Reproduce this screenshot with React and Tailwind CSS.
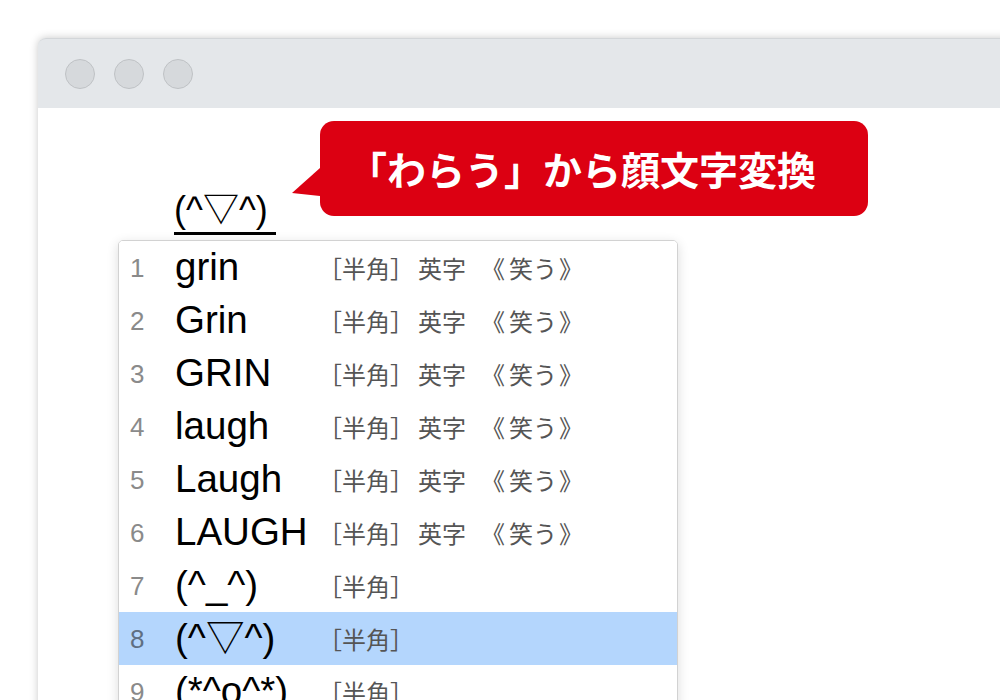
import React from "react";

const rows = [
  { n: 1, w: "grin", full: true },
  { n: 2, w: "Grin", full: true },
  { n: 3, w: "GRIN", full: true },
  { n: 4, w: "laugh", full: true },
  { n: 5, w: "Laugh", full: true },
  { n: 6, w: "LAUGH", full: true },
  { n: 7, w: "(^_^)", full: false },
  { n: 8, w: "(^▽^)", full: false, sel: true },
  { n: 9, w: "(*^o^*)", full: false },
];

const latin = { fontFamily: '"Liberation Sans", "Noto Sans CJK JP", sans-serif' };
const jp = { fontFamily: '"Noto Sans CJK JP", sans-serif' };

function Row({ r }) {
  return (
    <div className={`flex h-[53px] items-center ${r.sel ? "bg-[#b4d6fd]" : "bg-white"}`}>
      <div
        className={`w-[56px] pl-[11px] text-[26px] leading-none ${r.sel ? "text-[#5f6f82]" : "text-[#8a8a8a]"}`}
        style={latin}
      >
        {r.n}
      </div>
      <div className="w-[143px] text-[38.5px] leading-none text-black whitespace-nowrap" style={latin}>
        {r.w}
      </div>
      <div className="flex text-[24px] leading-none text-[#555555] whitespace-nowrap" style={jp}>
        <span>［半角］</span>
        {r.full && <span className="ml-[4px]">英字</span>}
        {r.full && <span className="ml-[15px]">《</span>}
        {r.full && <span className="ml-[4px]">笑う</span>}
        {r.full && <span className="ml-[2px]">》</span>}
      </div>
    </div>
  );
}

export default function App() {
  return (
    <div className="w-[1000px] h-[700px] overflow-hidden bg-white pl-[38px] pt-[38px]">
      <div className="w-[1000px] h-[700px] rounded-tl-[8px] bg-white shadow-[0_0_8px_rgba(0,0,0,0.22)]">
        <div className="h-[70px] rounded-tl-[8px] bg-[#e4e7ea] border-t border-[#d3d6d9] flex items-center gap-[19px] pl-[27px]">
          <div className="w-[30px] h-[30px] rounded-full bg-[#d6d9dc] border border-[#bfc2c5]" />
          <div className="w-[30px] h-[30px] rounded-full bg-[#d6d9dc] border border-[#bfc2c5]" />
          <div className="w-[30px] h-[30px] rounded-full bg-[#d6d9dc] border border-[#bfc2c5]" />
        </div>
        <div className="relative pl-[80px]">
          <div className="absolute left-[254px] top-[13px] flex">
            <svg width="28" height="95" className="block" viewBox="0 0 28 95">
              <polygon points="28,47 0,72 28,75" fill="#dc0012" />
            </svg>
            <div
              className="w-[548px] h-[95px] rounded-[14px] bg-[#dc0012] flex items-center justify-center text-white text-[39px] font-bold leading-none pr-[24px]"
              style={jp}
            >
              「わらう」から顔文字変換
            </div>
          </div>
          <div className="pt-[80px] pl-[56px]">
            <div
              className="w-[102px] h-[47px] border-b-[3px] border-black text-[36px] leading-[44px] text-black whitespace-nowrap"
              style={latin}
            >
              (^▽^)
            </div>
          </div>
          <div className="mt-[5px] w-[560px] rounded-[5px] border border-[#d2d2d2] bg-white shadow-[0_3px_12px_rgba(0,0,0,0.14)] overflow-hidden">
            {rows.map((r) => (
              <Row key={r.n} r={r} />
            ))}
          </div>
        </div>
      </div>
    </div>
  );
}
